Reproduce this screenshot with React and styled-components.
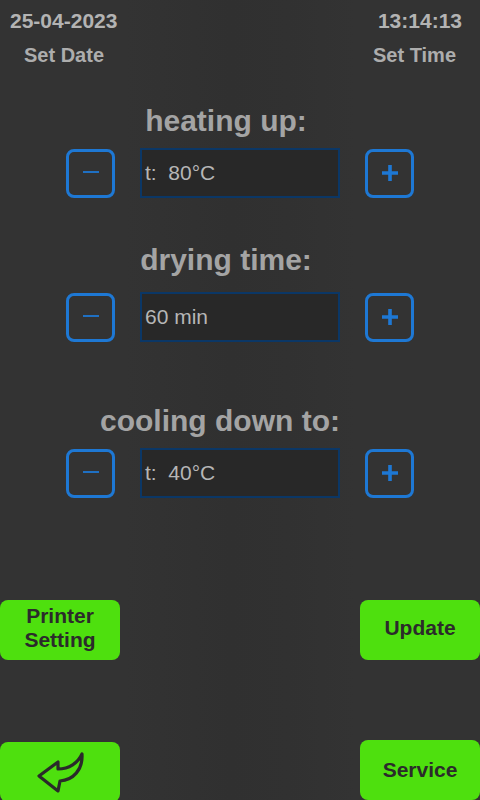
import React, { useState } from "react";
import styled, { createGlobalStyle } from "styled-components";

const GlobalStyle = createGlobalStyle`
  html, body {
    margin: 0;
    padding: 0;
    background: #333333;
    overflow: hidden;
  }
  * {
    box-sizing: border-box;
  }
`;

const Screen = styled.div`
  width: 480px;
  height: 800px;
  display: flex;
  flex-direction: column;
  font-family: "Liberation Sans", Arial, sans-serif;
  background: linear-gradient(
    to right,
    #333333 0%,
    #333333 26%,
    #303030 48%,
    #313131 60%,
    #333333 74%,
    #333333 100%
  );
  overflow: hidden;
`;

const ClockRow = styled.div`
  display: flex;
  justify-content: space-between;
  padding: 9px 18px 0 10px;
  font-size: 21px;
  line-height: 24px;
  font-weight: bold;
  color: #b3b3b3;
`;

const SetRow = styled.div`
  display: flex;
  justify-content: space-between;
  padding: 10px 24px 0 24px;
  font-size: 20px;
  line-height: 24px;
  font-weight: bold;
  color: #adadad;
`;

const Section = styled.section`
  display: flex;
  flex-direction: column;
  margin-top: ${(p) => p.$top}px;
`;

const Title = styled.h2`
  margin: 0 0 ${(p) => p.$gap}px 0;
  padding-right: ${(p) => p.$shift}px;
  text-align: center;
  font-size: 30px;
  line-height: 36px;
  font-weight: bold;
  color: #a4a4a4;
`;

const StepRow = styled.div`
  display: flex;
  justify-content: center;
  align-items: center;
  gap: 25px;
`;

const StepBtn = styled.button`
  width: 49px;
  height: 49px;
  border: 3px solid #1e78d4;
  border-radius: 8px;
  background: transparent;
  color: #1e78d4;
  display: flex;
  align-items: center;
  justify-content: center;
  padding: 0;
  cursor: pointer;
`;

const ValueBox = styled.div`
  width: 200px;
  height: 50px;
  border: 2px solid #0b3766;
  background: #282828;
  display: flex;
  align-items: center;
  padding-left: 3px;
  font-size: 21px;
  color: #b6b6b6;
  white-space: pre;
`;

const ActionRow = styled.div`
  display: flex;
  justify-content: space-between;
  align-items: flex-start;
  margin-top: ${(p) => p.$top}px;
`;

const GreenBtn = styled.button`
  width: 120px;
  height: 60px;
  margin-top: ${(p) => p.$offset || 0}px;
  border: none;
  border-radius: 8px;
  background: #4ee00e;
  color: #2b2b2b;
  font-family: "Liberation Sans", Arial, sans-serif;
  font-size: 21px;
  line-height: 24px;
  font-weight: bold;
  display: flex;
  align-items: center;
  justify-content: center;
  text-align: center;
  padding: 0 0 ${(p) => p.$lift || 0}px 0;
  cursor: pointer;
`;

function MinusIcon() {
  return (
    <svg width="18" height="6" viewBox="0 0 18 6">
      <line x1="1" y1="2" x2="17" y2="2" stroke="#1e78d4" strokeWidth="1.8" />
    </svg>
  );
}

function PlusIcon() {
  return (
    <svg width="18" height="18" viewBox="0 0 18 18">
      <path d="M9 1 V17 M1 9 H17" stroke="#1e78d4" strokeWidth="3.6" />
    </svg>
  );
}

function BackIcon() {
  return (
    <svg width="50" height="44" viewBox="0 0 50 44">
      <path
        d="M4 26 L23 12 L23 19 C34 19 43 13 47 4 C48 20 38 30 25 31 L23 41 Z"
        fill="none"
        stroke="#2a2a2a"
        strokeWidth="3.2"
        strokeLinejoin="round"
      />
    </svg>
  );
}

function Stepper({ title, value, top, gap, shift = 28, onDown, onUp }) {
  return (
    <Section $top={top}>
      <Title $gap={gap} $shift={shift}>
        {title}
      </Title>
      <StepRow>
        <StepBtn onClick={onDown}>
          <MinusIcon />
        </StepBtn>
        <ValueBox>{value}</ValueBox>
        <StepBtn onClick={onUp}>
          <PlusIcon />
        </StepBtn>
      </StepRow>
    </Section>
  );
}

export default function App() {
  const [heat, setHeat] = useState(80);
  const [dry, setDry] = useState(60);
  const [cool, setCool] = useState(40);

  return (
    <Screen>
      <GlobalStyle />
      <ClockRow>
        <span>25-04-2023</span>
        <span>13:14:13</span>
      </ClockRow>
      <SetRow>
        <span>Set Date</span>
        <span>Set Time</span>
      </SetRow>

      <Stepper
        title="heating up:"
        value={`t:  ${heat}°C`}
        top={36}
        gap={9}
        onDown={() => setHeat(heat - 5)}
        onUp={() => setHeat(heat + 5)}
      />
      <Stepper
        title="drying time:"
        value={`${dry} min`}
        top={44}
        gap={14}
        onDown={() => setDry(dry - 5)}
        onUp={() => setDry(dry + 5)}
      />
      <Stepper
        title="cooling down to:"
        value={`t:  ${cool}°C`}
        top={61}
        gap={9}
        shift={40}
        onDown={() => setCool(cool - 5)}
        onUp={() => setCool(cool + 5)}
      />

      <ActionRow $top={102}>
        <GreenBtn $lift={5}>
          Printer
          <br />
          Setting
        </GreenBtn>
        <GreenBtn $lift={5}>Update</GreenBtn>
      </ActionRow>
      <ActionRow $top={80}>
        <GreenBtn $offset={2} aria-label="back">
          <BackIcon />
        </GreenBtn>
        <GreenBtn>Service</GreenBtn>
      </ActionRow>
    </Screen>
  );
}
